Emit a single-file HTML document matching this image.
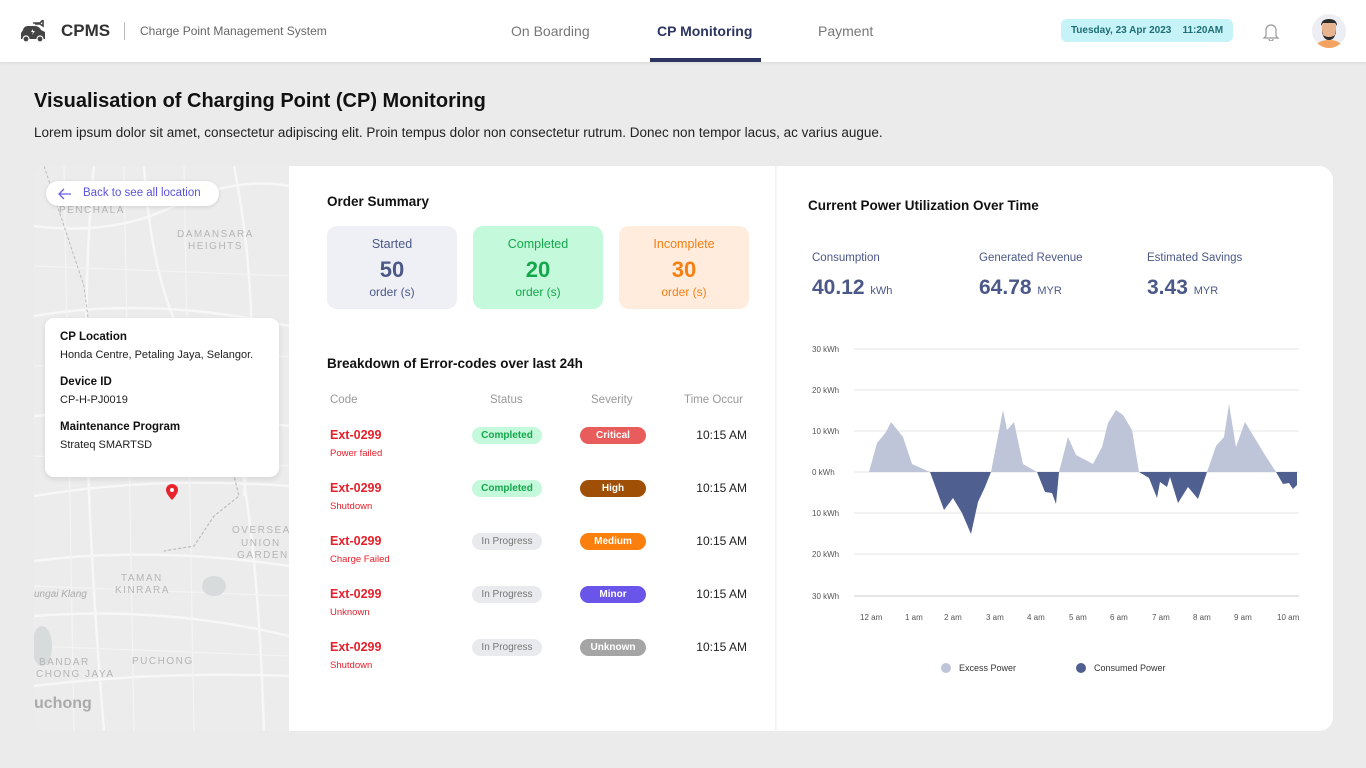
<!DOCTYPE html>
<html><head><meta charset="utf-8"><style>
*{margin:0;padding:0;box-sizing:border-box}
body{width:1366px;height:768px;background:#ebebeb;font-family:"Liberation Sans",Arial,sans-serif;position:relative;overflow:hidden;color:#111}
.a{position:absolute;white-space:nowrap}
.hdr{position:absolute;left:0;top:0;width:1366px;height:62px;background:#fff;box-shadow:0 1px 3px rgba(0,0,0,.08)}
.card{position:absolute;left:34px;top:166px;width:1299px;height:565px;background:#fff;border-radius:14px;overflow:hidden}
.sum{position:absolute;top:226px;width:130px;height:83px;border-radius:10px;text-align:center}
.sum .t{position:absolute;top:11px;left:0;right:0;font-size:12.5px}
.sum .n{position:absolute;top:31px;left:0;right:0;font-size:22px;font-weight:bold}
.sum .o{position:absolute;top:59px;left:0;right:0;font-size:12px}
.pill{position:absolute;height:17px;border-radius:9px;font-size:10px;text-align:center;line-height:17px}
.st{width:70px;left:472px}
.sv{width:66px;left:580px;color:#fff;font-weight:bold}
.code{position:absolute;left:330px;font-size:12.5px;font-weight:bold;color:#e5202a}
.sub{position:absolute;left:330px;font-size:9.5px;color:#e5202a}
.tm{position:absolute;left:660px;width:87px;text-align:right;font-size:12px;color:#222}
.ax{font-size:8px;fill:#555;font-family:"Liberation Sans",sans-serif}
</style></head><body>
<div class="hdr"></div>
<svg class="a" style="left:20px;top:20px" width="27" height="24" viewBox="0 0 27 24"><path d="M13 3h7l3-3v6l-3-2h-5" fill="none" stroke="#444" stroke-width="1.6"/><path d="M3 10q1-4 5-4h7q4 0 6 4l4 2v7H1v-6z" fill="#444"/><circle cx="6" cy="19" r="3" fill="#444" stroke="#fff" stroke-width="1.2"/><circle cx="20" cy="19" r="3" fill="#444" stroke="#fff" stroke-width="1.2"/><path d="M13 9l-2 3h2l-1 3 3-4h-2z" fill="#fff"/></svg>
<div class="a" style="left:61px;top:21px;font-size:17px;font-weight:bold;color:#333">CPMS</div>
<div class="a" style="left:124px;top:22px;width:1px;height:18px;background:#bbb"></div>
<div class="a" style="left:140px;top:24px;font-size:12px;color:#666">Charge Point Management System</div>
<div class="a" style="left:511px;top:23px;font-size:14px;color:#777">On Boarding</div>
<div class="a" style="left:657px;top:23px;font-size:14px;color:#2b3560;font-weight:bold">CP Monitoring</div>
<div class="a" style="left:650px;top:58px;width:111px;height:4px;background:#2b3560"></div>
<div class="a" style="left:818px;top:23px;font-size:14px;color:#777">Payment</div>
<div class="a" style="left:1061px;top:19px;width:172px;height:23px;background:#c6f3f8;border-radius:6px;font-size:10px;color:#1d6e74;font-weight:bold;line-height:23px;text-align:center">Tuesday, 23 Apr 2023 &nbsp;&nbsp; 11:20AM</div>
<svg class="a" style="left:1262px;top:22px" width="18" height="19" viewBox="0 0 18 19"><path d="M4 14V8a5 5 0 0110 0v6l2 2H2z" fill="none" stroke="#999" stroke-width="1.2"/><path d="M7 17a2 2 0 004 0" fill="none" stroke="#999" stroke-width="1.2"/></svg>
<svg class="a" style="left:1312px;top:14px" width="34" height="34" viewBox="0 0 34 34"><circle cx="17" cy="17" r="17" fill="#eceef3"/><clipPath id="c"><circle cx="17" cy="17" r="17"/></clipPath><g clip-path="url(#c)"><path d="M3 34q2-8 14-8t14 8z" fill="#f4a460"/><rect x="10" y="7" width="14" height="16" rx="6" fill="#e8b48f"/><path d="M10 14q0 12 7 12t7-12v6q-3 3-7 3t-7-3z" fill="#2b2b2b"/><path d="M9 12q0-7 8-7t8 7l-2-3H11z" fill="#2b2b2b"/></g></svg>
<div class="a" style="left:34px;top:90px;font-size:20px;font-weight:bold;color:#111">Visualisation of Charging Point (CP) Monitoring</div>
<div class="a" style="left:34px;top:125px;font-size:13.5px;color:#222">Lorem ipsum dolor sit amet, consectetur adipiscing elit. Proin tempus dolor non consectetur rutrum. Donec non tempor lacus, ac varius augue.</div>
<div class="card">
<svg class="a" style="left:0;top:0" width="255" height="565" viewBox="0 0 255 565">
<rect width="255" height="565" fill="#ececec"/>
<g fill="none" stroke="#f7f7f7" stroke-width="2.5">
<path d="M0 60Q80 70 140 40T255 20"/><path d="M0 250Q100 240 255 260"/><path d="M0 330Q120 310 255 320"/><path d="M0 395Q120 380 255 400"/><path d="M0 450Q130 440 255 470"/><path d="M0 520Q120 505 255 510"/><path d="M110 0Q120 150 170 200T230 565"/><path d="M60 0Q40 200 70 565"/><path d="M200 0Q230 150 210 330"/><path d="M0 150Q120 130 255 160"/>
</g>
<g fill="none" stroke="#f4f4f4" stroke-width="1.2">
<path d="M0 100L255 110"/><path d="M0 200L255 190"/><path d="M30 0L40 565"/><path d="M150 0L160 565"/><path d="M0 290L255 300"/><path d="M0 420L255 430"/><path d="M0 480L255 490"/><path d="M90 0L100 565"/></g>
<path d="M200 290l10 10-10 10 5 20-25 20-20 30-30 5" fill="none" stroke="#bbb" stroke-width="1.2" stroke-dasharray="3 2"/>
<path d="M10 0L30 60 50 120 60 200" fill="none" stroke="#bbb" stroke-width="1" stroke-dasharray="3 2"/>
<ellipse cx="180" cy="420" rx="12" ry="10" fill="#d8dbdc"/><ellipse cx="8" cy="480" rx="10" ry="20" fill="#d8dbdc"/>
<g font-family="Liberation Sans,sans-serif" font-size="10" fill="#b5b5b5" letter-spacing="1.5"><text x="25" y="47">PENCHALA</text><text x="143" y="71">DAMANSARA</text><text x="154" y="83">HEIGHTS</text><text x="198" y="367">OVERSEAS</text><text x="207" y="380">UNION</text><text x="203" y="392">GARDEN</text><text x="87" y="415">TAMAN</text><text x="81" y="427">KINRARA</text><text x="98" y="498">PUCHONG</text><text x="5" y="499">BANDAR</text><text x="2" y="511">CHONG JAYA</text></g>
<text x="0" y="431" font-family="Liberation Sans,sans-serif" font-size="10" fill="#aaa" font-style="italic">ungai Klang</text>
<text x="0" y="542" font-family="Liberation Sans,sans-serif" font-size="16" fill="#aaa" font-weight="bold">uchong</text>
<path d="M132 324a6 6 0 0112 0c0 4-6 10-6 10s-6-6-6-10z" fill="#e8232b"/><circle cx="138" cy="324" r="2" fill="#fff"/>
</svg>
<div class="a" style="left:12px;top:15px;width:173px;height:25px;background:#fff;border-radius:13px;box-shadow:0 1px 4px rgba(0,0,0,.12);font-size:11.5px;color:#5b53e0;line-height:25px;padding-left:37px">Back to see all location</div>
<svg class="a" style="left:24px;top:22px" width="14" height="12" viewBox="0 0 14 12"><path d="M13 6H2M6 1L1 6l5 5" fill="none" stroke="#6a62e6" stroke-width="1.3"/></svg>
<div class="a" style="left:11px;top:152px;width:234px;height:159px;background:#fff;border-radius:9px;box-shadow:0 2px 6px rgba(0,0,0,.1)"></div>
<div class="a" style="left:26px;top:165px;font-size:11.5px;font-weight:bold">CP Location</div>
<div class="a" style="left:26px;top:183px;font-size:11px;color:#222">Honda Centre, Petaling Jaya, Selangor.</div>
<div class="a" style="left:26px;top:210px;font-size:11.5px;font-weight:bold">Device ID</div>
<div class="a" style="left:26px;top:228px;font-size:11px;color:#222">CP-H-PJ0019</div>
<div class="a" style="left:26px;top:255px;font-size:11.5px;font-weight:bold">Maintenance Program</div>
<div class="a" style="left:26px;top:273px;font-size:11px;color:#222">Strateq SMARTSD</div>
<div class="a" style="left:741px;top:0;width:3px;height:565px;background:linear-gradient(90deg,#f0f0f0,#fff)"></div>
</div>
<div class="a" style="left:327px;top:194px;font-size:13.5px;font-weight:bold">Order Summary</div>
<div class="sum" style="left:327px;background:#eff0f6;color:#4b5888"><div class="t">Started</div><div class="n">50</div><div class="o">order (s)</div></div>
<div class="sum" style="left:473px;background:#c4f9db;color:#14a84b"><div class="t">Completed</div><div class="n">20</div><div class="o">order (s)</div></div>
<div class="sum" style="left:619px;background:#ffecdc;color:#f57f12"><div class="t">Incomplete</div><div class="n">30</div><div class="o">order (s)</div></div>
<div class="a" style="left:327px;top:356px;font-size:13.5px;font-weight:bold">Breakdown of Error-codes over last 24h</div>
<div class="a" style="left:330px;top:394px;font-size:11.5px;color:#999">Code</div>
<div class="a" style="left:490px;top:394px;font-size:11.5px;color:#999">Status</div>
<div class="a" style="left:591px;top:394px;font-size:11.5px;color:#999">Severity</div>
<div class="a" style="left:684px;top:394px;font-size:11.5px;color:#999">Time Occur</div>

<div class="code" style="top:428px">Ext-0299</div><div class="sub" style="top:448px">Power failed</div>
<div class="pill st" style="top:427px;background:#c4f9db;color:#14a84b;font-weight:bold">Completed</div>
<div class="pill sv" style="top:427px;background:#e85c5c">Critical</div>
<div class="tm" style="top:428px">10:15 AM</div>

<div class="code" style="top:481px">Ext-0299</div><div class="sub" style="top:501px">Shutdown</div>
<div class="pill st" style="top:480px;background:#c4f9db;color:#14a84b;font-weight:bold">Completed</div>
<div class="pill sv" style="top:480px;background:#a04f06">High</div>
<div class="tm" style="top:481px">10:15 AM</div>

<div class="code" style="top:534px">Ext-0299</div><div class="sub" style="top:554px">Charge Failed</div>
<div class="pill st" style="top:533px;background:#e8eaee;color:#777">In Progress</div>
<div class="pill sv" style="top:533px;background:#fb7f0c">Medium</div>
<div class="tm" style="top:534px">10:15 AM</div>

<div class="code" style="top:587px">Ext-0299</div><div class="sub" style="top:607px">Unknown</div>
<div class="pill st" style="top:586px;background:#e8eaee;color:#777">In Progress</div>
<div class="pill sv" style="top:586px;background:#6a55ea">Minor</div>
<div class="tm" style="top:587px">10:15 AM</div>

<div class="code" style="top:640px">Ext-0299</div><div class="sub" style="top:660px">Shutdown</div>
<div class="pill st" style="top:639px;background:#e8eaee;color:#777">In Progress</div>
<div class="pill sv" style="top:639px;background:#a5a5a5">Unknown</div>
<div class="tm" style="top:640px">10:15 AM</div>

<div class="a" style="left:808px;top:198px;font-size:13.5px;font-weight:bold">Current Power Utilization Over Time</div>
<div class="a" style="left:812px;top:252px;font-size:11.5px;color:#4b5888">Consumption</div>
<div class="a" style="left:979px;top:252px;font-size:11.5px;color:#4b5888">Generated Revenue</div>
<div class="a" style="left:1147px;top:252px;font-size:11.5px;color:#4b5888">Estimated Savings</div>
<div class="a" style="left:812px;top:276px;font-size:21px;font-weight:bold;color:#4b5888">40.12 <span style="font-size:11px;font-weight:normal">kWh</span></div>
<div class="a" style="left:979px;top:276px;font-size:21px;font-weight:bold;color:#4b5888">64.78 <span style="font-size:11px;font-weight:normal">MYR</span></div>
<div class="a" style="left:1147px;top:276px;font-size:21px;font-weight:bold;color:#4b5888">3.43 <span style="font-size:11px;font-weight:normal">MYR</span></div>

<svg class="a" style="left:0;top:0" width="1366" height="768">
<g stroke="#e6e6e6" stroke-width="1"><path d="M854 349H1299M854 390H1299M854 431H1299M854 472H1299M854 513H1299M854 554H1299"/></g>
<path d="M854 596H1299" stroke="#ccc"/>
<g class="ax"><text x="812" y="352">30 kWh</text><text x="812" y="393">20 kWh</text><text x="812" y="434">10 kWh</text><text x="812" y="475">0 kWh</text><text x="812" y="516">10 kWh</text><text x="812" y="557">20 kWh</text><text x="812" y="599">30 kWh</text>
<text x="860" y="620">12 am</text><text x="905" y="620">1 am</text><text x="944" y="620">2 am</text><text x="986" y="620">3 am</text><text x="1027" y="620">4 am</text><text x="1069" y="620">5 am</text><text x="1110" y="620">6 am</text><text x="1152" y="620">7 am</text><text x="1193" y="620">8 am</text><text x="1234" y="620">9 am</text><text x="1277" y="620">10 am</text></g>
<g fill="#bfc5d8">
<path d="M869 472L877 443 882 437 886 432 891 422 903 437 912 464 930 472Z"/>
<path d="M991 472L1003 410 1007 430 1014 422 1023 464 1037 472Z"/>
<path d="M1059 472L1068 437 1076 455 1093 464 1102 447 1108 423 1116 410 1123 415 1132 430 1139 472Z"/>
<path d="M1207 472L1216 446 1224 437 1229 404 1236 447 1245 422 1265 455 1276 472Z"/>
</g>
<g fill="#4f5f8f">
<path d="M930 472L944 510 953 498 962 513 971 534 978 502 985 487 991 472Z"/>
<path d="M1037 472L1045 492 1052 493 1056 504 1059 472Z"/>
<path d="M1139 472L1149 478 1157 498 1160 482 1167 487 1170 477 1178 503 1188 487 1198 499 1207 472Z"/>
<path d="M1276 472L1283 484 1289 483 1293 489 1297 485 1297 472Z"/>
</g>
<circle cx="946" cy="668" r="5" fill="#bfc5d8"/><text x="959" y="671" class="ax" style="font-size:9px;fill:#333">Excess Power</text>
<circle cx="1081" cy="668" r="5" fill="#4f5f8f"/><text x="1094" y="671" class="ax" style="font-size:9px;fill:#333">Consumed Power</text>
</svg>
</body></html>
